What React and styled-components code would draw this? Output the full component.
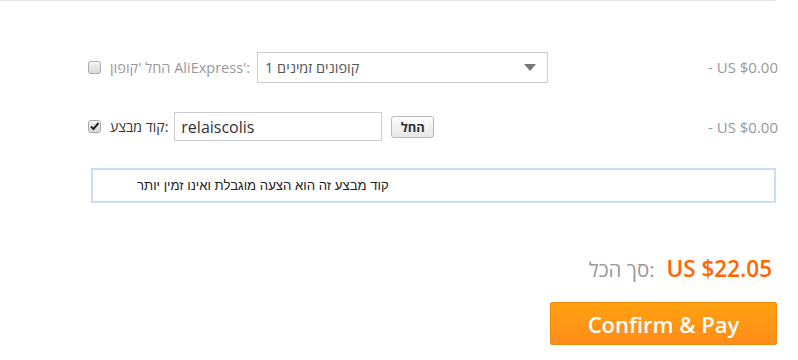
import React from "react";
import styled, { createGlobalStyle } from "styled-components";

const Global = createGlobalStyle`
  html, body { margin: 0; padding: 0; background: #fff; }
  body { font-family: "Open Sans", "Noto Sans", sans-serif; }
`;

const Page = styled.div`
  width: 798px;
  height: 360px;
  overflow: hidden;
`;

const TopRule = styled.div`
  width: 775px;
  height: 1px;
  background: #e3e3e3;
`;

const Content = styled.div`
  padding: 50px 20px 0 88px;
  display: flex;
  flex-direction: column;
`;

const Row = styled.div`
  display: flex;
  align-items: center;
  justify-content: space-between;
  height: ${(p) => p.$h}px;
  margin-top: ${(p) => p.$mt || 0}px;
`;

const Left = styled.div`
  display: flex;
  align-items: center;
`;

const Check = styled.span`
  width: 11px;
  height: 11px;
  border: 1px solid #a9a9a9;
  border-radius: 3px;
  background: linear-gradient(#f2f2f2, #d9d9d9);
  box-shadow: inset 0 1px 0 #fff;
  position: relative;
  flex: none;
  svg { position: absolute; left: 0; top: 0; }
`;

const Label = styled.span`
  margin-left: 9px;
  font-size: ${(p) => (p.$dark ? 14 : 14.5)}px;
  color: ${(p) => (p.$dark ? "#333" : "#999")};
  white-space: nowrap;
`;

const Select = styled.div`
  margin-left: 7px;
  width: 291px;
  height: 31px;
  box-sizing: border-box;
  border: 1px solid #cccccc;
  display: flex;
  align-items: center;
  justify-content: space-between;
  padding: 0 11px 0 7px;
  font-size: 14.5px;
  color: #555;
`;

const Input = styled.div`
  margin-left: 6px;
  width: 200px;
  height: 27px;
  border: 1px solid #ccc;
  padding: 0 0 0 6px;
  display: flex;
  align-items: center;
  font-size: 16px;
  color: #333;
`;

const ApplyBtn = styled.button`
  margin-left: 9px;
  width: 43px;
  height: 22px;
  border: 1px solid #b9b9b9;
  border-radius: 3px;
  background: linear-gradient(#fdfdfd, #e6e6e6);
  font-family: "Open Sans", "Noto Sans", sans-serif;
  font-weight: 700;
  font-size: 13px;
  color: #333;
  padding: 0;
  line-height: 20px;
`;

const Amount = styled.span`
  font-size: 15px;
  color: #999;
  white-space: nowrap;
`;

const Notice = styled.div`
  margin: 27px 2px 0 3px;
  height: 31px;
  border: 2px solid #c9def6;
  display: flex;
  align-items: center;
  padding-left: 44px;
  font-family: "Liberation Sans", Arial, sans-serif;
  font-size: 13.2px;
  color: #222;
`;

const TotalRow = styled.div`
  margin-top: 50px;
  display: flex;
  justify-content: flex-end;
  align-items: baseline;
  gap: 12px;
  padding-right: 6px;
`;

const TotalLabel = styled.span`
  font-size: 20.5px;
  color: #999;
`;

const TotalValue = styled.span`
  font-size: 22.5px;
  font-weight: 600;
  color: #ff6600;
`;

const PayRow = styled.div`
  margin-top: 18px;
  display: flex;
  justify-content: flex-end;
  padding-right: 1px;
`;

const PayBtn = styled.button`
  width: 227px;
  height: 43px;
  border: 1px solid #f08a0c;
  border-radius: 2px;
  background: linear-gradient(#ffa20e, #ff8b1c);
  color: #fff;
  font-family: "Open Sans", "Noto Sans", sans-serif;
  font-weight: 600;
  font-size: 22px;
  padding: 0;
`;

const Arrow = () => (
  <svg width="12" height="7" viewBox="0 0 12 7">
    <path d="M0 0 L12 0 L6 7 Z" fill="#777" />
  </svg>
);

const Box = ({ checked }) => (
  <Check>
    {checked && (
      <svg width="11" height="11" viewBox="0 0 11 11">
        <path d="M2 5.5 L4.5 8 L9.5 2" stroke="#222" strokeWidth="2" fill="none" />
      </svg>
    )}
  </Check>
);

export default function App() {
  return (
    <Page>
      <Global />
      <TopRule />
      <Content>
        <Row $h={32}>
          <Left>
            <Box />
            <Label>{"החל 'קופון AliExpress':"}</Label>
            <Select>
              <span>1 קופונים זמינים</span>
              <Arrow />
            </Select>
          </Left>
          <Amount>- US $0.00</Amount>
        </Row>
        <Row $h={29} $mt={29}>
          <Left>
            <Box checked />
            <Label $dark>קוד מבצע:</Label>
            <Input>relaiscolis</Input>
            <ApplyBtn>החל</ApplyBtn>
          </Left>
          <Amount>- US $0.00</Amount>
        </Row>
        <Notice>קוד מבצע זה הוא הצעה מוגבלת ואינו זמין יותר</Notice>
        <TotalRow>
          <TotalLabel>סך הכל:</TotalLabel>
          <TotalValue>US $22.05</TotalValue>
        </TotalRow>
        <PayRow>
          <PayBtn>Confirm &amp; Pay</PayBtn>
        </PayRow>
      </Content>
    </Page>
  );
}
